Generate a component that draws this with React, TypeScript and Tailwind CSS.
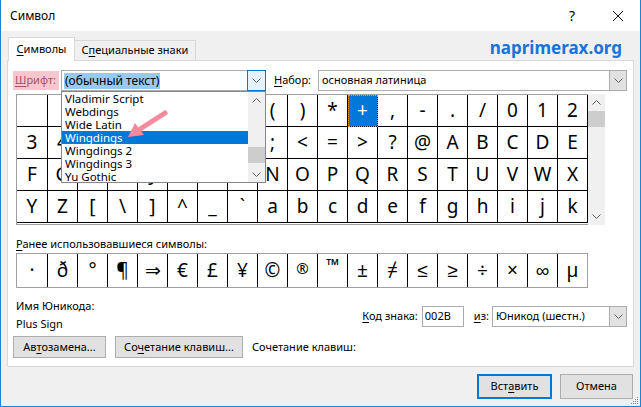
import React from "react";

const gridRows: string[][] = [
  [" ", "!", '"', "#", "$", "%", "&", "'", "(", ")", "*", "+", ",", "-", ".", "/", "0", "1", "2"],
  ["3", "4", "5", "6", "7", "8", "9", ":", ";", "<", "=", ">", "?", "@", "A", "B", "C", "D", "E"],
  ["F", "G", "H", "I", "J", "K", "L", "M", "N", "O", "P", "Q", "R", "S", "T", "U", "V", "W", "X"],
  ["Y", "Z", "[", "\\", "]", "^", "_", "`", "a", "b", "c", "d", "e", "f", "g", "h", "i", "j", "k"],
];

const recent = ["·", "ð", "°", "¶", "⇒", "€", "£", "¥", "©", "®", "™", "±", "≠", "≤", "≥", "÷", "×", "∞", "µ"];

const fonts = ["Vladimir Script", "Webdings", "Wide Latin", "Wingdings", "Wingdings 2", "Wingdings 3", "Yu Gothic"];

const Chevron = ({ up = false, color = "#606060" }: { up?: boolean; color?: string }) => (
  <svg width="9" height="5" viewBox="0 0 9 5">
    <path d={up ? "M0.5 4.5 L4.5 0.5 L8.5 4.5" : "M0.5 0.5 L4.5 4.5 L8.5 0.5"} fill="none" stroke={color} strokeWidth="1" />
  </svg>
);

const U = ({ children }: { children: React.ReactNode }) => (
  <span className="underline underline-offset-2 decoration-1">{children}</span>
);

const Combo = ({ width, text, focused = false }: { width: string; text: React.ReactNode; focused?: boolean }) => (
  <div className={`${width} h-[21px] flex border border-[#acacac] bg-white`}>
    <div className="flex-1 flex items-center pl-[2px] overflow-hidden whitespace-nowrap">{text}</div>
    <div
      className={
        focused
          ? "w-[19px] h-[21px] flex items-center justify-center border border-[#0078d7] bg-[#e5f1fb] -my-px -mr-px"
          : "w-[17px] h-full flex items-center justify-center border-l border-[#acacac] bg-[#e1e1e1]"
      }
    >
      <Chevron />
    </div>
  </div>
);

const App = () => {
  return (
    <div className="relative w-[641px] h-[407px] bg-[#f0f0f0] border-l border-r border-b border-[#1883d7] flex flex-col text-[11px] text-black font-[Noto_Sans,sans-serif] overflow-hidden">
      {/* title bar */}
      <div className="h-[31px] bg-white flex items-center shrink-0">
        <span className="ml-[9px] text-[12px]">Символ</span>
        <span className="ml-auto text-[14px] mr-[37px]">?</span>
        <svg width="12" height="12" viewBox="0 0 12 12" className="mr-[16px]">
          <path d="M1 1 L11 11 M11 1 L1 11" stroke="#111" strokeWidth="1" />
        </svg>
      </div>

      <div className="flex flex-col px-[6px] pt-[6px]">
        {/* tabs */}
        <div className="flex items-end h-[23px]">
          <div className="relative z-10 ml-[1px] w-[67px] h-[24px] -mb-px bg-white border border-b-0 border-[#d9d9d9] flex items-center justify-center">
            <span><U>С</U>имволы</span>
          </div>
          <div className="w-[121px] h-[20px] border border-l-0 border-b-0 border-[#d9d9d9] flex items-center justify-center">
            <span>С<U>п</U>ециальные знаки</span>
          </div>
          <div className="ml-auto mr-[12px] self-center -mt-[2px] text-[17px] font-bold text-[#1a73d6] leading-none">
            naprimerax.org
          </div>
        </div>

        {/* panel */}
        <div className="h-[307px] bg-white border border-[#d9d9d9] flex flex-col">
          <div className="flex items-center h-[21px] mt-[9px]">
            <div className="ml-[5px] w-[46px] h-[19px] bg-[#f8c6cf] text-[#a4505e] flex items-center pl-[2px]">
              <span><U>Ш</U>рифт:</span>
            </div>
            <div className="ml-[2px]">
              <Combo
                width="w-[205px]"
                focused
                text={<span className="bg-[#99c9ef] px-px leading-[16px] text-[12px]">(обычный текст)</span>}
              />
            </div>
            <span className="ml-[8px]"><U>Н</U>абор:</span>
            <div className="ml-auto mr-[6px]">
              <Combo width="w-[309px]" text={<span className="pl-px">основная латиница</span>} />
            </div>
          </div>

          {/* symbol grid */}
          <div className="flex mt-[3px] ml-[8px]">
            <div className="border-l border-t border-b border-[#a0a0a0]">
              {gridRows.map((row, r) => (
                <div key={r} className="flex">
                  {row.map((ch, c) => {
                    const sel = r === 0 && c === 11;
                    return (
                      <div
                        key={c}
                        className={`${c === 0 ? "w-[31px]" : "w-[30px]"} h-[32px] border-r border-b border-black flex items-center justify-center text-[19px] ${
                          sel ? "bg-[#0078d7] text-white outline-1 outline-dotted outline-[#f0a030] -outline-offset-1" : ""
                        }`}
                      >
                        {ch}
                      </div>
                    );
                  })}
                </div>
              ))}
            </div>
            <div className="w-[17px] h-[131px] bg-[#f0f0f0] flex flex-col items-center">
              <div className="h-[17px] flex items-center justify-center">
                <Chevron up />
              </div>
              <div className="w-full h-[16px] bg-[#cdcdcd]" />
              <div className="mt-auto h-[17px] flex items-center justify-center">
                <Chevron />
              </div>
            </div>
          </div>

          <div className="ml-[8px] mt-[11px] leading-[16px]">
            <U>Р</U>анее использовавшиеся символы:
          </div>
          <div className="ml-[8px] mt-px flex w-fit border-l border-t border-b border-[#a0a0a0]">
            {recent.map((ch, i) => {
              const extra =
                ch === "™"
                  ? "text-[17px] font-bold -mt-[12px]"
                  : ch === "®"
                  ? "text-[15px] -mt-[4px]"
                  : "text-[19px]";
              return (
                <div
                  key={i}
                  className={`${i === 0 ? "w-[31px]" : "w-[30px]"} h-[33px] flex items-center justify-center border-r ${
                    i === recent.length - 1 ? "border-[#a0a0a0]" : "border-black"
                  }`}
                >
                  <span className={extra}>{ch}</span>
                </div>
              );
            })}
          </div>

          <div className="flex mt-[10px]">
            <div className="ml-[8px] flex flex-col leading-[16px]">
              <span>Имя Юникода:</span>
              <span className="mt-[2px]">Plus Sign</span>
            </div>
            <div className="ml-auto mr-[6px] mt-[8px] flex items-center h-[21px]">
              <span><U>К</U>од знака:</span>
              <div className="ml-[4px] w-[42px] h-[21px] border border-[#acacac] bg-white flex items-center pl-[2px]">002B</div>
              <span className="ml-[10px]"><U>и</U>з:</span>
              <div className="ml-[3px]">
                <Combo width="w-[135px]" text={<span className="pl-px">Юникод (шестн.)</span>} />
              </div>
            </div>
          </div>

          <div className="flex items-center mt-[4px] ml-[5px]">
            <div className="w-[93px] h-[22px] bg-[#e1e1e1] border border-[#adadad] flex items-center justify-center">
              <span>Ав<U>т</U>озамена...</span>
            </div>
            <div className="ml-[9px] w-[128px] h-[22px] bg-[#e1e1e1] border border-[#adadad] flex items-center justify-center">
              <span>Со<U>ч</U>етание клавиш...</span>
            </div>
            <span className="ml-[9px]">Сочетание клавиш:</span>
          </div>
        </div>

        {/* bottom buttons */}
        <div className="flex justify-end mt-[7px] mr-[1px] gap-[8px]">
          <div className="w-[75px] h-[25px] bg-[#e1e1e1] border-2 border-[#0078d7] flex items-center justify-center">
            <span>Вст<U>а</U>вить</span>
          </div>
          <div className="w-[73px] h-[25px] bg-[#e1e1e1] border border-[#adadad] flex items-center justify-center">
            <span>Отмена</span>
          </div>
        </div>
      </div>

      {/* resize grip */}
      <svg width="10" height="10" viewBox="0 0 10 10" className="absolute right-[1px] bottom-[1px]">
        <rect x="8" y="2" width="1" height="1" fill="#888" />
        <rect x="6" y="4" width="1" height="1" fill="#888" />
        <rect x="8" y="4" width="1" height="1" fill="#888" />
        <rect x="4" y="6" width="1" height="1" fill="#888" />
        <rect x="6" y="6" width="1" height="1" fill="#888" />
        <rect x="8" y="6" width="1" height="1" fill="#888" />
        <rect x="2" y="8" width="1" height="1" fill="#888" />
        <rect x="4" y="8" width="1" height="1" fill="#888" />
        <rect x="6" y="8" width="1" height="1" fill="#888" />
        <rect x="8" y="8" width="1" height="1" fill="#888" />
      </svg>

      {/* open font dropdown list */}
      <div className="absolute left-[60px] top-[91px] w-[205px] h-[92px] bg-white border border-[#828790] flex">
        <div className="flex-1 flex flex-col">
          {fonts.map((f) => (
            <div
              key={f}
              className={`h-[13px] leading-[13px] pl-[3px] text-[11.5px] whitespace-nowrap ${
                f === "Wingdings" ? "bg-[#0078d7] text-white" : ""
              }`}
            >
              {f}
            </div>
          ))}
        </div>
        <div className="w-[17px] h-full bg-[#f0f0f0] flex flex-col items-center">
          <div className="h-[16px] flex items-center justify-center">
            <Chevron up />
          </div>
          <div className="mt-[39px] w-full h-[16px] bg-[#cdcdcd]" />
          <div className="mt-auto h-[16px] flex items-center justify-center">
            <Chevron />
          </div>
        </div>
      </div>

      {/* pink arrow */}
      <svg width="50" height="36" viewBox="0 0 50 36" className="absolute left-[122px] top-[108px]">
        <path d="M42 5 L14 23" stroke="#f48a9c" strokeWidth="5" strokeLinecap="round" />
        <path d="M5 29 L12 15 L21 27 Z" fill="#f48a9c" />
      </svg>
    </div>
  );
};

export default App;
